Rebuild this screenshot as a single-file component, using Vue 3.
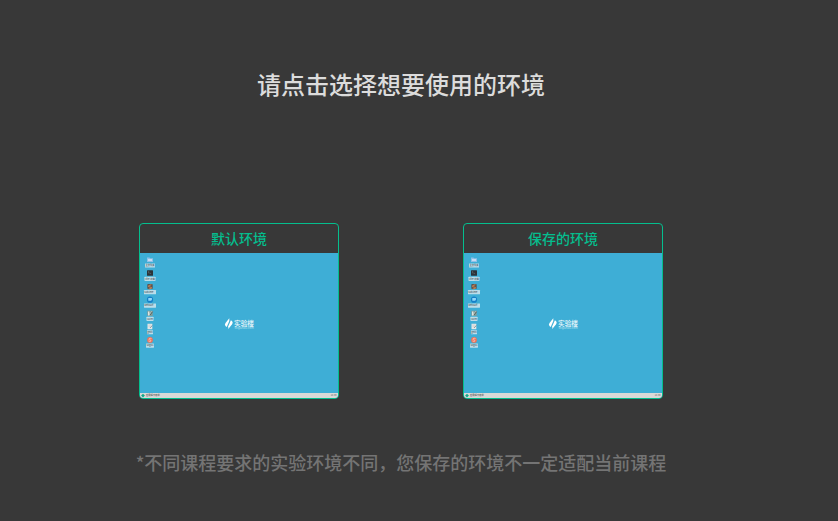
<script setup>
const environments = [
  { id: 'default', name: '默认环境' },
  { id: 'saved', name: '保存的环境' },
]

const shortcuts = [
  { kind: 'home', label: '主文件夹', width: 10 },
  { kind: 'terminal', label: 'Xfce 终端', width: 11 },
  { kind: 'sublime', label: 'Sublime ...', width: 12 },
  { kind: 'browser', label: 'WebSurf ...', width: 12 },
  { kind: 'editor', label: 'GVim', width: 7 },
  { kind: 'notes', label: 'gedit', width: 6 },
  { kind: 'input', label: 'Sogou', width: 8 },
]

const emit = defineEmits(['select'])
</script>

<template>
  <main class="page">
    <h1 class="title">请点击选择想要使用的环境</h1>

    <div class="cards">
      <button
        v-for="env in environments"
        :key="env.id"
        type="button"
        class="card"
        @click="emit('select', env.id)"
      >
        <span class="card-name">{{ env.name }}</span>
        <svg class="desktop" viewBox="0 0 198 145" aria-hidden="true">
          <rect width="198" height="145" fill="#3eaed6" />

          <g
            v-for="(item, i) in shortcuts"
            :key="item.kind"
            :transform="`translate(10 ${7 + i * 13.35})`"
          >
            <g v-if="item.kind === 'home'">
              <path d="M-3-2.500h2.500l.6.700H3v3.900h-6z" fill="#8fc1e8" />
              <path d="M-2-1h4v2h-4z" fill="#c9dcf2" />
            </g>
            <g v-else-if="item.kind === 'terminal'">
              <rect x="-3" y="-3" width="6" height="5.500" rx=".5" fill="#2c3338" />
              <path d="M-2-2l1.200.9-1.200.9M-.5 0h1.600" fill="none" stroke="#7d888d" stroke-width=".5" />
            </g>
            <g v-else-if="item.kind === 'sublime'">
              <rect x="-2.700" y="-2.800" width="5.400" height="5.200" rx=".8" fill="#5b5350" />
              <path d="M1.400-2l-2.800 1v1l2.800.7v1l-2.800.7" fill="none" stroke="#d58a55" stroke-width=".9" />
            </g>
            <g v-else-if="item.kind === 'browser'">
              <circle cy="-.4" r="3.100" fill="#1680c8" />
              <path d="M-1.700-2h3.600v2l-1 .7h-2.600z" fill="#8fd8fa" />
            </g>
            <g v-else-if="item.kind === 'editor'">
              <rect x="-2.700" y="-2.700" width="5.400" height="5.200" fill="#7f9c9a" />
              <path d="M-2-2h1.400v2.500L1.500-2h1L-.8 2.200H-2z" fill="#dfe4e0" />
              <path d="M0 1.500l2.500-3.200" stroke="#4b5953" stroke-width="1" />
            </g>
            <g v-else-if="item.kind === 'notes'">
              <rect x="-2.500" y="-3" width="4.800" height="5.500" fill="#e4e7e7" />
              <path d="M0 1.200l2.300-2.500" stroke="#6e7f86" stroke-width=".8" />
              <path d="M-1.600-1.600h2.800M-1.600-.4h1.600" stroke="#b2bec3" stroke-width=".4" />
            </g>
            <g v-else>
              <circle cy="-.2" r="2.900" fill="#ed7057" />
              <path d="M1.500-1.500C-.2-2.300-1.800-1.200-.8-.4 0 .1 1.600 0 .9 1-.1 1.600-1 1.300-1.600.8" fill="none" stroke="#ffd9cd" stroke-width=".7" />
            </g>
            <rect :x="-item.width / 2" y="3.400" :width="item.width" height="4.200" rx=".4" fill="#bcdde9" />
            <text y="6.400" text-anchor="middle" font-size="2.300" fill="#33444c">{{ item.label }}</text>
          </g>

          <path d="M89.300 65.300v2.700L86.700 74q-1.700-.7-1.700-2.400 0-1 .7-1.900z" fill="#fff" />
          <path d="M88.300 75.900v-2.700L90.900 67.200q1.700.7 1.700 2.400 0 1-.7 1.900z" fill="#fff" />
          <text x="94" y="72.600" font-size="6.700" font-weight="500" fill="#f0f9fc">实验楼</text>
          <text class="site" x="94.500" y="76" font-size="3" fill="#b4e0ef">shiyanlou.com</text>

          <rect y="140" width="198" height="5" fill="#d9d9d7" />
          <path d="M3 140.800l1.900 1.700L3 144.400l-1.900-1.900z" fill="#11a98a" />
          <text x="6" y="143.400" font-size="2.300" fill="#333">应用程序菜单</text>
          <text x="196.500" y="143.400" text-anchor="end" font-size="2.300" fill="#555">14:30</text>
        </svg>
      </button>
    </div>

    <p class="note">*不同课程要求的实验环境不同，您保存的环境不一定适配当前课程</p>
  </main>
</template>

<style>
body {
  margin: 0;
  background: #383838;
}
</style>

<style scoped>
.page {
  box-sizing: border-box;
  min-height: 100vh;
  padding: 66px 36px 28px 0;
  background: #383838;
  font-family: "Noto Sans CJK SC", sans-serif;
  text-align: center;
}

.title {
  margin: 0;
  color: #dcdcdc;
  font-size: 24px;
  font-weight: 500;
  line-height: 36px;
}

.cards {
  display: flex;
  justify-content: center;
  gap: 124px;
  margin-top: 121px;
}

.card {
  display: flex;
  flex-direction: column;
  box-sizing: border-box;
  width: 200px;
  padding: 0;
  overflow: hidden;
  border: 1px solid #04be8e;
  border-radius: 4px;
  background: transparent;
  color: #04be8e;
  font: inherit;
  cursor: pointer;
}

.card-name {
  width: 100%;
  font-size: 14px;
  font-weight: 500;
  line-height: 29px;
}

.desktop {
  display: block;
  width: 100%;
}

.site {
  font-family: "Liberation Sans", sans-serif;
}

.note {
  margin: 49px 0 0;
  color: #747474;
  font-size: 18px;
  font-weight: 500;
  line-height: 28px;
}
</style>
